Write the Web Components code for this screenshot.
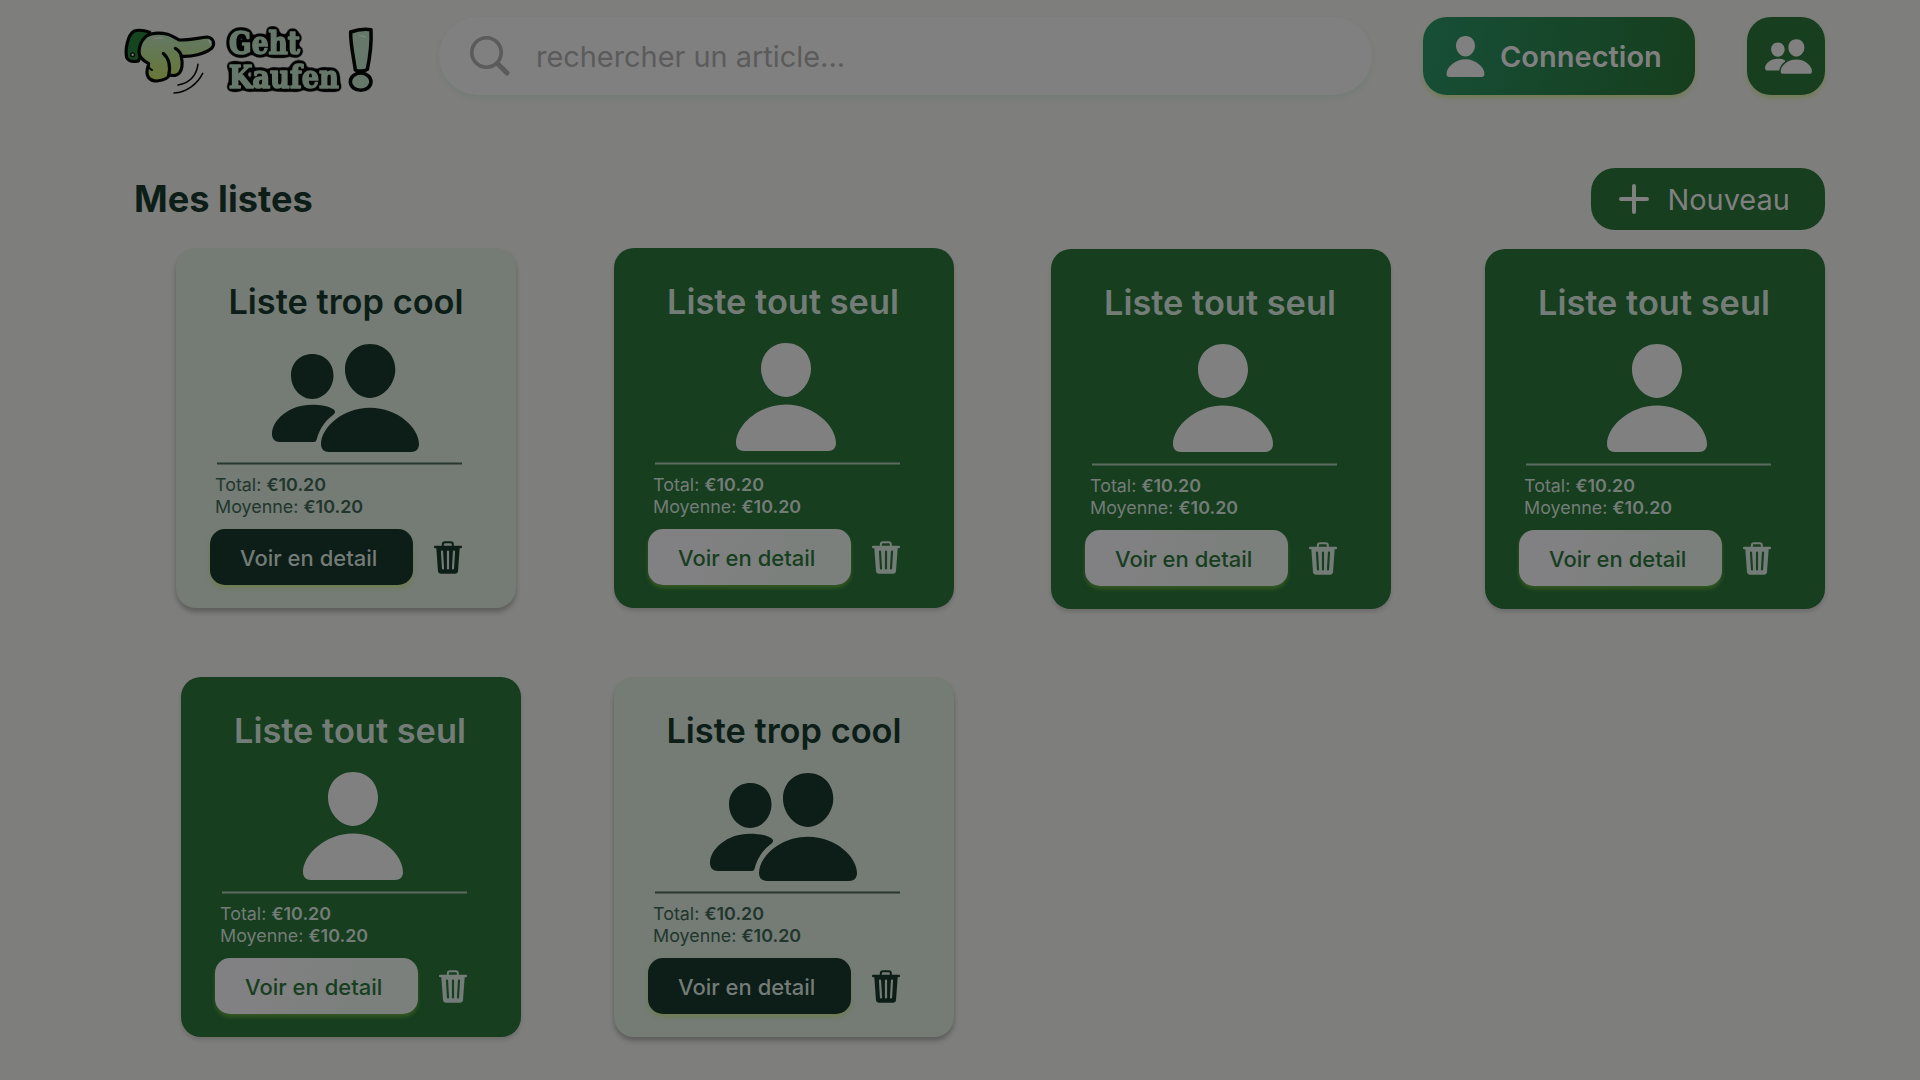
<!DOCTYPE html>
<html lang="fr">
<head>
<meta charset="utf-8">
<title>Geht Kaufen</title>
<style>
html,body{margin:0;height:1080px;overflow:hidden;background:#7e7e7c;font-family:Inter,"Liberation Sans",sans-serif}
</style>
</head>
<body>
<gk-app></gk-app>
<script>
const define = (name, render) => customElements.define(name, class extends HTMLElement {
  connectedCallback() {
    if (this.shadowRoot) return;
    this.attachShadow({mode: 'open'}).innerHTML = render(this);
  }
});

define('gk-logo', () => `
<style>:host{display:block;width:280px;height:100px}svg{display:block}
text{font-family:"DejaVu Serif",serif;font-weight:700;fill:#66786a;stroke:#66786a;stroke-width:5;stroke-linejoin:round}</style>
<svg width="280" height="100" viewBox="0 0 840 300">
<defs><linearGradient id="skin" x1="0" y1="0" x2="0" y2="1"><stop offset="0" stop-color="#647867"/><stop offset=".5" stop-color="#64784d"/><stop offset="1" stop-color="#6a7636"/></linearGradient>
<filter id="rim" x="-15%" y="-25%" width="130%" height="150%" color-interpolation-filters="sRGB"><feGaussianBlur in="SourceAlpha" stdDeviation="7.500"/><feComponentTransfer result="o"><feFuncR type="linear" slope="0" intercept=".01"/><feFuncG type="linear" slope="0" intercept=".015"/><feFuncB type="linear" slope="0" intercept=".01"/><feFuncA type="linear" slope="12" intercept="-.7"/></feComponentTransfer><feMerge><feMergeNode in="o"/><feMergeNode in="SourceGraphic"/></feMerge></filter></defs>
<g stroke="#030504" stroke-width="9.500" stroke-linejoin="round" stroke-linecap="round">
<path fill="#14451f" d="M119 67C103 61 83 59 71 64C53 76 45 118 50 143C55 153 66 157 85 153L106 110Z"/>
<circle cx="68" cy="134" r="5.5" fill="#858585" stroke-width="4"/>
<path fill="url(#skin)" d="M108 79C119 69 148 67 173 73C187 77 197 85 208 90C235 91 263 84 291 81C311 83 316 102 305 115C283 133 244 141 214 139C218 159 217 178 208 189C201 197 190 198 178 195C174 205 160 211 141 213C116 213 108 197 112 177L116 161C99 151 87 142 87 126C87 104 96 90 108 79Z"/>
<path fill="none" d="M160 130C175 144 183 166 176 196M196 115C204 120 213 127 214 140"/><path fill="none" stroke-width="6" d="M116 161C115 171 118 177 126 180"/>
<path fill="none" stroke-width="4.500" d="M264 163C259 197 237 219 204 225M278 190C262 222 231 246 192 249"/>
</g>
<path d="M126 89C139 80 154 81 168 87C153 85 139 85 126 89ZM292 89C303 91 305 97 301 104C299 95 296 93 292 89Z" fill="#858d88"/>
<g filter="url(#rim)"><text x="357" y="133" font-size="93" textLength="213" lengthAdjust="spacingAndGlyphs">Geht</text>
<text x="356" y="235" font-size="95" textLength="331" lengthAdjust="spacingAndGlyphs">Kaufen</text></g>
<path fill="#66786a" stroke="#030504" stroke-width="10.500" stroke-linejoin="round" d="M722 66C738 60 764 56 783 59C785 99 779 145 772 178C763 184 746 185 736 180C731 142 721 103 722 66Z"/>
<ellipse cx="752" cy="215" rx="31" ry="26" fill="#66786a" stroke="#030504" stroke-width="10.500"/>
<path fill="#828a85" d="M743 79C754 73 766 75 768 84C759 79 753 78 743 79Z"/>
</svg>`);

define('gk-person', () => `
<style>:host{display:block;width:100px;height:108px}svg{display:block;width:100%;height:100%;fill:currentColor}</style>
<svg viewBox="0 0 100 108"><path d="M50 0C64.5 0 75 11 75 25.500C75 40 63.500 54 50 54C36.500 54 25 40 25 25.500C25 11 35.500 0 50 0ZM50 61.500C78 61.500 100 83 100 100C100 105 97 108 92 108H8C3 108 0 105 0 100C0 83 22 61.500 50 61.500Z"/></svg>`);

define('gk-people', () => `
<style>:host{display:block;width:147px;height:108px}svg{display:block;width:100%;height:100%;fill:currentColor}</style>
<svg viewBox="0 0 147 108"><path d="M98 0C112.500 0 123.300 11 123.300 25.500C123.300 40 111.500 54 98 54C84.500 54 73 40 73 25.500C73 11 83.500 0 98 0ZM98 63.700C126 63.700 147 84 147 100C147 105 144 108 139 108H57C52 108 49 105 49 100C49 84 70 63.700 98 63.700ZM40.300 10C52.500 10 61.500 19 61.500 31.500C61.500 44 52 55 40.300 55C28.500 55 19 44 19 31.500C19 19 28 10 40.300 10ZM40 60.700C48 60.700 56 62 61 65C64 67 63.500 69 61 71C52.500 77 47 86 44.500 96Q44 98 42 98H8C3 98 0 95 0 90C0 76 17 60.700 40 60.700Z"/></svg>`);

define('gk-trash', () => `
<style>:host{display:block;width:28px;height:33px}svg{display:block}</style>
<svg width="28" height="33" viewBox="0 0 84 98"><g fill="currentColor"><path d="M3 14H81Q84 14 84 17V18Q84 21 80 21H77L72 90Q71 98 64 98H20Q13 98 12 90L7 21H4Q0 21 0 18V17Q0 14 3 14Z"/></g><path d="M26.500 16V9Q26.500 3 33 3H50Q56.500 3 56.500 9V16" fill="none" stroke="currentColor" stroke-width="6"/><path d="M24 31L27 82M42 31V82M60 31L57 82" stroke="var(--card)" stroke-width="6.500" stroke-linecap="round"/></svg>`);

define('gk-search', () => `
<style>:host{display:flex;align-items:center;box-sizing:border-box;width:933px;height:78px;padding-left:31px;border-radius:39px;background:#808080;box-shadow:0 3px 4px rgba(92,124,108,.3);color:#5b5b5b;font-size:28.900px;line-height:35px}
svg{display:block;width:40px;height:40px;margin-right:26px}</style>
<svg viewBox="0 0 40 40" fill="none" stroke="currentColor" stroke-linecap="round"><circle cx="16.500" cy="16.500" r="14.700" stroke-width="3.600"/><path d="M27.500 27.500L37 37" stroke-width="4.800"/></svg><span><slot></slot></span>`);

define('gk-login', () => `
<style>:host{display:flex;box-sizing:border-box;width:272px;height:78px;padding:19px 0 0 23px;border-radius:24px;background:linear-gradient(105deg,#174e36 5%,#163e1d);box-shadow:0 3px 4px rgba(100,125,35,.45);color:#808080;font-size:29px;font-weight:600;line-height:35px}
gk-person{width:39px;height:41px;margin-right:15px}span{padding-top:3px}</style>
<gk-person></gk-person><span><slot></slot></span>`);

define('gk-group-button', () => `
<style>:host{display:flex;box-sizing:border-box;width:78px;height:78px;padding:22px 0 0 18px;border-radius:24px;background:#163e1f;box-shadow:0 3px 4px rgba(100,125,35,.45);color:#808080}gk-people{width:47px;height:35px}</style><gk-people></gk-people>`);

define('gk-new', () => `
<style>:host{display:flex;box-sizing:border-box;width:234px;height:62px;padding:14px 0 0 28px;border-radius:24px;background:#163e1f;color:#808080;font-size:28.900px;font-weight:400;line-height:35px}
svg{width:30px;height:30px;margin:2px 18.500px 0 0}</style>
<svg viewBox="0 0 30 30" stroke="currentColor" stroke-width="4" stroke-linecap="round"><path d="M15 2V28M2 15H28"/></svg><span><slot></slot></span>`);

define('gk-card', el => {
  const shared = el.hasAttribute('shared');
  return `
<style>
:host{--card:#163e1f;--ink:#747c77;--icon:#808080;--btn:linear-gradient(105deg,#818082 25%,#7b807c 75%);--btn-ink:#163e1f;--glow:rgba(86,116,36,.5);--line:116,124,119;
display:flex;flex-direction:column;box-sizing:border-box;flex:none;width:340px;height:360px;padding:33px 34px 0;border-radius:20px;background:var(--card);color:var(--ink);box-shadow:0 3px 4px rgba(0,0,0,.14)}
:host([shared]){--card:#747c75;--ink:#22362d;--icon:#0c1e17;--btn:#0c1e17;--btn-ink:#747c77;--glow:rgba(104,124,40,.45);--line:12,30,23;box-shadow:0 4px 5px rgba(0,0,0,.26)}
h2{margin:0 -33px 0 -35px;text-align:center;font-size:34.400px;font-weight:600;line-height:41px}
:host([shared]) h2{margin:0 -34px;color:#0c1e17}
.icon{display:flex;height:109px;margin:21px 0 10px 62px;color:var(--icon)}
.icon gk-person{margin-left:26px}.icon gk-people{margin-top:1px}
.line{width:245px;height:3px;margin-left:7px;background:linear-gradient(rgba(var(--line),.38) 0 1px,rgba(var(--line),.72) 1px 2px,rgba(var(--line),.38) 2px)}
p{margin:9px 0 11px 5px;height:44px;font-size:17.900px;line-height:22px;font-weight:400}
b{font-weight:600}
footer{display:flex;gap:21px}
.btn{box-sizing:border-box;width:203px;height:56px;padding:16px 0 0 30px;border-radius:15px;background:var(--btn);color:var(--btn-ink);box-shadow:0 3px 4px var(--glow);font-size:22px;font-weight:500;line-height:26px}
gk-trash{margin-top:12px}
:host([shared]) gk-trash{color:#0c1e17}
</style>
<h2><slot></slot></h2>
<div class="icon">${shared ? '<gk-people></gk-people>' : '<gk-person></gk-person>'}</div>
<div class="line"></div>
<p>Total: <b>€10.20</b><br>Moyenne: <b>€10.20</b></p>
<footer><div class="btn">Voir en detail</div><gk-trash></gk-trash></footer>`;
});

define('gk-app', () => `
<style>
:host{display:flex;flex-direction:column;width:1920px;height:1080px;background:#7e7e7c}
header{display:flex;align-items:flex-start;height:151px;padding:17px 0 0 110px;box-sizing:border-box}
gk-logo{margin:-7px 49px 0 0}
gk-search{margin-right:51px}gk-login{margin-right:52px}
.head{display:flex;justify-content:space-between;height:63px;margin-top:17px;padding:0 95px 0 134px}
h1{margin:9px 0 0;color:#0c1e17;font-size:36.200px;font-weight:700;line-height:44px}
.row{display:flex;align-items:flex-start}
.one{height:429px;margin-top:17px;padding-left:176px}
.two{padding-left:181px}
</style>
<header><gk-logo></gk-logo><gk-search>rechercher un article...</gk-search><gk-login>Connection</gk-login><gk-group-button></gk-group-button></header>
<section class="head"><h1>Mes listes</h1><gk-new>Nouveau</gk-new></section>
<section class="row one">
<gk-card shared>Liste trop cool</gk-card>
<gk-card style="margin-left:98px">Liste tout seul</gk-card>
<gk-card style="margin:1px 0 0 97px">Liste tout seul</gk-card>
<gk-card style="margin:1px 0 0 94px">Liste tout seul</gk-card>
</section>
<section class="row two">
<gk-card>Liste tout seul</gk-card>
<gk-card shared style="margin-left:93px">Liste trop cool</gk-card>
</section>`);
</script>
</body>
</html>
